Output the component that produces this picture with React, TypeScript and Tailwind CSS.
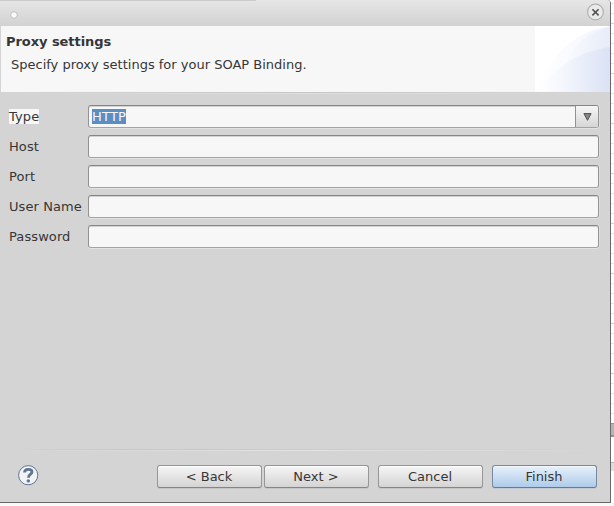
import React from "react";

const fieldShell =
  "h-[23px] w-[511px] rounded-[3px] border border-t-[#858585] border-x-[#929292] border-b-[#a3a3a3] bg-[#f7f7f7] shadow-[inset_0_1px_0_#d2d2d2,0_1px_0_#e3e3e3,1px_0_0_#dedede]";

function Row({ label, children, selected = false }: { label: string; children?: React.ReactNode; selected?: boolean }) {
  return (
    <div className="flex h-[30px] items-start pl-[9px]">
      <div className="flex h-[23px] w-[79px] shrink-0 items-center tracking-[0.09px] whitespace-nowrap">
        <span className={selected ? "bg-[#f7f7f7] leading-[15px]" : "leading-[15px]"}>{label}</span>
      </div>
      {children ?? <div className={fieldShell} />}
    </div>
  );
}

function PushButton({ label, className = "", primary = false }: { label: string; className?: string; primary?: boolean }) {
  const tone = primary
    ? "border-[#78899f] border-b-[#68798e] from-[#e8f1fb] to-[#aecbea] shadow-[inset_0_1px_0_#f3f8fd,0_1px_0_#c4c9cf]"
    : "border-[#969696] border-b-[#858585] from-[#f6f6f6] to-[#d4d4d4] shadow-[inset_0_1px_0_#ffffff,0_1px_0_#c6c6c6]";
  return (
    <button
      className={`flex h-[23px] w-[105px] items-center justify-center rounded-[3px] border bg-linear-to-b pr-px pb-px ${tone} ${className}`}
    >
      {label}
    </button>
  );
}

function HeaderArt() {
  return (
    <svg className="block h-[66px] w-[75px]" viewBox="0 0 75 66">
      <defs>
        <linearGradient id="outer" x1="0" x2="1">
          <stop offset="0" stopColor="#ffffff" />
          <stop offset="0.6" stopColor="#f7f9fe" />
          <stop offset="1" stopColor="#eef2fb" />
        </linearGradient>
        <linearGradient id="upper" x1="0" x2="1">
          <stop offset="0" stopColor="#fafbfe" />
          <stop offset="1" stopColor="#e6ecf9" />
        </linearGradient>
        <linearGradient id="lower" x1="0" x2="1">
          <stop offset="0" stopColor="#ffffff" />
          <stop offset="0.3" stopColor="#f6f8fd" />
          <stop offset="0.65" stopColor="#e8edf9" />
          <stop offset="1" stopColor="#dbe2f6" />
        </linearGradient>
      </defs>
      <rect width="75" height="66" fill="#fff" />
      <path d="M3 60C12 35 36 6 75 0V66H3Z" fill="url(#outer)" />
      <path d="M30 36C38 24 46 8 75 1V66H30Z" fill="url(#upper)" />
      <path d="M3 66C17 43 43 25 75 21V66Z" fill="url(#lower)" />
    </svg>
  );
}

function BackgroundEdge() {
  const lines = Array.from({ length: 42 }, (_, i) => 3 + i * 10);
  return (
    <svg className="block h-[506px] w-[3px] shrink-0" viewBox="0 0 3 506" shapeRendering="crispEdges">
      <rect width="3" height="506" fill="#fff" />
      {lines.map((y) => (
        <rect
          key={y}
          y={y}
          width="3"
          height="1"
          fill={y > 250 ? (y % 50 === 23 ? "#d0d0d0" : "#e6e6e6") : y % 50 === 23 ? "#cfd2ee" : "#e5e6ec"}
        />
      ))}
      <rect y="423" width="3" height="14" fill="#929292" />
      <rect y="424" width="3" height="11" fill="#b4b4b4" />
      <rect y="462" width="3" height="9" fill="#dedede" />
      <rect y="462" width="3" height="1" fill="#b8b8b8" />
      <rect y="503" width="3" height="3" fill="#f7f7f7" />
    </svg>
  );
}

export default function App() {
  return (
    <div className="flex h-[506px] w-[614px] overflow-hidden bg-[#f9f9f9] font-['DejaVu_Sans',sans-serif] text-[13px] leading-[15px] text-[#363636]">
      <div className="flex h-[503px] w-[611px] shrink-0 flex-col rounded-tr-[4px] border-r border-b border-[#686868] bg-[#d4d4d4]">
        <div className="flex h-[26px] shrink-0 flex-col rounded-tr-[3px] bg-linear-to-b from-[#e6e6e6] to-[#d2d2d2]">
          <div className="h-px w-[256px] bg-[#cbcbcb]" />
          <div className="flex justify-between pr-[5px] pl-[10px]">
            <svg className="mt-[10px] h-2 w-2" viewBox="0 0 8 8">
              <circle cx="4" cy="4" r="3.3" fill="#fafafa" stroke="#bebebe" />
            </svg>
            <svg className="mt-[2px] h-[18px] w-[18px]" viewBox="0 0 18 18">
              <circle cx="8.5" cy="9" r="7.9" fill="#eaeaea" stroke="#b1b1b1" strokeWidth="1.2" />
              <path d="M5.4 6.2L11.6 12.4M11.6 6.2L5.4 12.4" stroke="#505050" strokeWidth="1.6" />
            </svg>
          </div>
        </div>

        <div className="flex h-[66px] shrink-0 justify-between border-l border-[#d4d4d4] bg-[#f7f7f7]">
          <div>
            <h1 className="mt-[8px] ml-[5px] text-[13px] leading-[15px] font-bold tracking-[-0.06px]">Proxy settings</h1>
            <p className="mt-[8px] ml-[10px] whitespace-nowrap">Specify proxy settings for your SOAP Binding.</p>
          </div>
          <HeaderArt />
        </div>
        <div className="h-px shrink-0 bg-linear-to-r from-[#d4d4d4] via-[#c6c6c6] to-[#d4d4d4]" />
        <div className="h-px shrink-0 bg-linear-to-r from-[#d4d4d4] via-[#e0e0e0] to-[#d4d4d4]" />

        <main className="pt-[11px]">
          <Row label="Type" selected>
            <div className={`${fieldShell} flex`}>
              <div className="flex flex-1 items-center pl-[3px]">
                <span className="bg-[#5a8ec4] leading-[15px] tracking-[0.2px] text-[#f7f7f7]">HTTP</span>
              </div>
              <div className="flex w-[23px] items-center justify-center rounded-r-[2px] border-l border-[#929292] bg-linear-to-b from-[#f7f7f7] to-[#d6d6d6]">
                <svg className="h-[8px] w-[9px]" viewBox="0 0 9 8">
                  <path d="M.9 .6H8.1L4.5 7.3Z" fill="#858585" stroke="#505050" />
                </svg>
              </div>
            </div>
          </Row>
          <Row label="Host" />
          <Row label="Port" />
          <Row label="User Name" />
          <Row label="Password" />
        </main>

        <footer className="mt-auto h-[53px] shrink-0">
          <div className="mx-[6px] h-px bg-linear-to-r from-[#d4d4d4] via-[#c6c6c6] via-20% to-[#d4d4d4]" />
          <div className="mx-[6px] h-px bg-linear-to-r from-[#d4d4d4] via-[#e3e3e3] via-50% to-[#d4d4d4]" />
          <div className="flex pt-[14px] pl-[18px]">
            <svg className="h-[21px] w-[21px]" viewBox="0 0 21 21">
              <circle cx="10.2" cy="10.2" r="9.6" fill="#f2f3f5" stroke="#5e7595" />
              <path d="M6.5 7.6C6.5 5.2 8.2 4.3 10.3 4.3C12.7 4.3 14 5.4 14 7.1C14 9.3 10.4 9.3 10.4 12.8" fill="none" stroke="#5e7595" strokeWidth="2.8" />
              <circle cx="10.3" cy="15.9" r="1.7" fill="#5e7595" />
            </svg>
            <PushButton label="< Back" className="ml-[118px]" />
            <PushButton label="Next >" className="ml-[2px]" />
            <PushButton label="Cancel" className="ml-[9px]" />
            <PushButton label="Finish" className="ml-[9px]" primary />
          </div>
        </footer>
      </div>
      <BackgroundEdge />
    </div>
  );
}
